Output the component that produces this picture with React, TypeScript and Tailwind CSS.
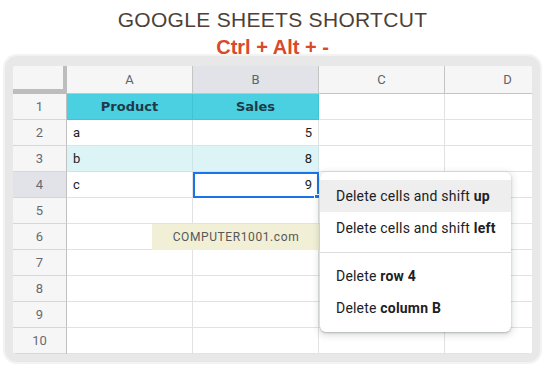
const columns = ["A", "B", "C", "D"];

type Row = { a?: string; b?: string; kind?: "head" | "band" | "selected" };

const rows: Row[] = [
  { a: "Product", b: "Sales", kind: "head" },
  { a: "a", b: "5" },
  { a: "b", b: "8", kind: "band" },
  { a: "c", b: "9", kind: "selected" },
  {},
  {},
  {},
  {},
  {},
  {},
];

const menuItems = [
  { label: "Delete cells and shift ", bold: "up", active: true },
  { label: "Delete cells and shift ", bold: "left" },
  { label: "Delete ", bold: "row 4", divider: true },
  { label: "Delete ", bold: "column B" },
];

function DataCell({
  text,
  align,
  row,
}: {
  text?: string;
  align: "left" | "right";
  row: Row;
}) {
  if (row.kind === "head") {
    return (
      <div className="w-[126px] shrink-0 h-full flex items-center justify-center border-r border-b border-[#3fc4d4] bg-[#4ad0e1] font-['DejaVu_Sans'] font-bold text-[13px] text-[#1f3a4b]">
        {text}
      </div>
    );
  }
  const bg = row.kind === "band" ? "bg-[#ddf4f6] border-[#cfe4e7]" : "bg-white border-[#e2e2e2]";
  return (
    <div
      className={`relative w-[126px] shrink-0 h-full flex items-center px-[6px] border-r border-b text-[13px] text-[#222] ${bg} ${
        align === "right" ? "justify-end" : "justify-start"
      }`}
    >
      {text}
      {row.kind === "selected" && align === "right" && (
        <>
          <div className="absolute top-0 left-0 -right-px -bottom-px border-2 border-[#1a73e8]" />
          <div className="absolute -right-[2px] -bottom-[3px] w-[6px] h-[6px] bg-[#1a73e8] border border-white" />
        </>
      )}
    </div>
  );
}

export default function App() {
  return (
    <div className="w-[545px] h-[369px] bg-white overflow-hidden font-['Roboto',sans-serif]">
      <div className="h-[56px]">
        <h1 className="pt-[8px] text-center text-[21px] leading-[24px] tracking-[0.3px] text-[#4e3f38] font-['Liberation_Sans',sans-serif]">
          GOOGLE SHEETS SHORTCUT
        </h1>
        <p className="mt-[4px] text-center text-[20px] leading-[22px] font-bold text-[#d94a29] font-['Liberation_Sans',sans-serif]">
          Ctrl + Alt + -
        </p>
      </div>

      <div className="ml-[5px] w-[535px] border-x-[8px] border-t-[10px] border-b-[8px] border-[#e8e8e8] rounded-[12px] shadow-[0_0_1px_2px_#f2f2f2] overflow-hidden">
        <div className="relative w-[519px] h-[288px] overflow-hidden">
          <div className="flex h-[28px]">
            <div className="w-[54px] shrink-0 h-full bg-[#f6f6f6] border-r-[4px] border-b-[5px] border-[#bdbdbd]" />
            {columns.map((c) => (
              <div
                key={c}
                className={`w-[126px] shrink-0 h-full flex items-center justify-center border-r border-b border-[#c4c4c4] text-[13px] text-[#5f6368] ${
                  c === "B" ? "bg-[#e1e3e8]" : "bg-[#f6f6f6]"
                }`}
              >
                {c}
              </div>
            ))}
          </div>

          {rows.map((row, i) => (
            <div key={i} className="flex h-[26px]">
              <div
                className={`w-[54px] shrink-0 h-full flex items-center justify-center border-r border-r-[#c0c0c0] border-b border-b-[#d6d6d6] text-[13px] text-[#666a70] ${
                  i === 3 ? "bg-[#e1e3e8]" : "bg-[#f6f6f6]"
                }`}
              >
                {i + 1}
              </div>
              <DataCell text={row.a} align="left" row={row} />
              <DataCell text={row.b} align="right" row={row} />
              <div className="w-[126px] shrink-0 h-full bg-white border-r border-b border-[#e2e2e2]" />
              <div className="w-[126px] shrink-0 h-full bg-white border-r border-b border-[#e2e2e2]" />
            </div>
          ))}

          <div className="absolute left-[139px] top-[158px] w-[168px] h-[26px] bg-[#f1efd6] flex items-center justify-center text-[12px] tracking-[0.6px] text-[#585858]">
            COMPUTER1001.com
          </div>

          <div className="absolute left-[307px] top-[106px] w-[191px] py-[8px] bg-white rounded-[6px] shadow-[0_2px_6px_2px_rgba(60,64,67,0.15),0_1px_2px_rgba(60,64,67,0.3)]">
            {menuItems.map((item) => (
              <div key={item.bold}>
                {item.divider && <div className="mt-[8px] mb-[7px] h-px bg-[#dadce0]" />}
                <div
                  className={`h-[32px] flex items-center pl-[16px] text-[14px] tracking-[0.2px] text-[#202124] ${
                    item.active ? "bg-[#eeeeee]" : ""
                  }`}
                >
                  <span className="whitespace-pre">{item.label}</span>
                  <span className="font-bold">{item.bold}</span>
                </div>
              </div>
            ))}
          </div>
        </div>
      </div>
    </div>
  );
}
